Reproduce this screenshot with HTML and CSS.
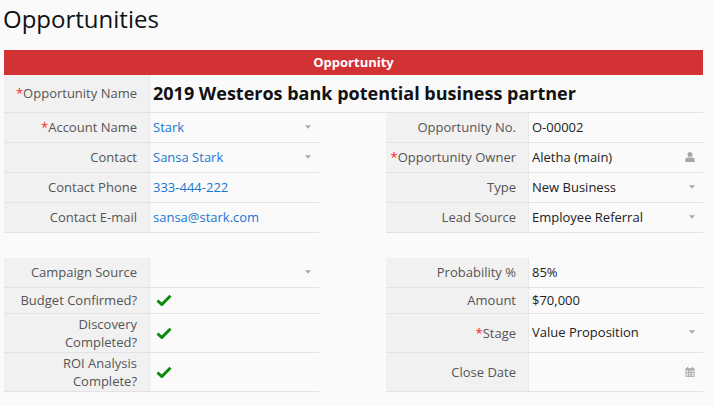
FILE: index.html
```html
<!DOCTYPE html>
<html lang="en">
<head>
<meta charset="utf-8">
<title>Opportunities</title>
<link rel="stylesheet" href="styles.css">
</head>
<body>
<h1 class="title">Opportunities</h1>
<section class="form">
  <div class="banner">Opportunity</div>
  <div class="row row-name">
    <div class="label"><span class="req">*</span>Opportunity Name</div>
    <div class="value name">2019 Westeros bank potential business partner</div>
  </div>
  <div class="columns">
    <div class="rows left">
      <div class="row"><div class="label"><span class="req">*</span>Account Name</div><div class="value link">Stark<svg class="caret" viewBox="0 0 7 4"><path d="M0 0h7L3.500 4z"/></svg></div></div>
      <div class="row"><div class="label">Contact</div><div class="value link">Sansa Stark<svg class="caret" viewBox="0 0 7 4"><path d="M0 0h7L3.500 4z"/></svg></div></div>
      <div class="row"><div class="label">Contact Phone</div><div class="value link">333-444-222</div></div>
      <div class="row"><div class="label">Contact E-mail</div><div class="value link">sansa@stark.com</div></div>
    </div>
    <div class="rows right">
      <div class="row"><div class="label">Opportunity No.</div><div class="value">O-00002</div></div>
      <div class="row"><div class="label"><span class="req">*</span>Opportunity Owner</div><div class="value">Aletha (main)<svg class="icon" viewBox="0 0 10 10"><circle cx="5" cy="2.600" r="2.500"/><path d="M.3 10V7.600C.3 6.100 1.400 5.400 2.800 5.400h4.400c1.400 0 2.500.7 2.500 2.200V10z"/></svg></div></div>
      <div class="row"><div class="label">Type</div><div class="value">New Business<svg class="caret" viewBox="0 0 7 4"><path d="M0 0h7L3.500 4z"/></svg></div></div>
      <div class="row"><div class="label">Lead Source</div><div class="value">Employee Referral<svg class="caret" viewBox="0 0 7 4"><path d="M0 0h7L3.500 4z"/></svg></div></div>
    </div>
  </div>
  <div class="columns second">
    <div class="rows left">
      <div class="row"><div class="label">Campaign Source</div><div class="value"><svg class="caret" viewBox="0 0 7 4"><path d="M0 0h7L3.500 4z"/></svg></div></div>
      <div class="row short"><div class="label">Budget Confirmed?</div><div class="value"><svg class="check" viewBox="0 0 16 12"><path d="M1.500 6.500 5.800 10.500 14.500 1.800"/></svg></div></div>
      <div class="row tall"><div class="label">Discovery Completed?</div><div class="value"><svg class="check" viewBox="0 0 16 12"><path d="M1.500 6.500 5.800 10.500 14.500 1.800"/></svg></div></div>
      <div class="row tall"><div class="label">ROI Analysis Complete?</div><div class="value"><svg class="check" viewBox="0 0 16 12"><path d="M1.500 6.500 5.800 10.500 14.500 1.800"/></svg></div></div>
    </div>
    <div class="rows right">
      <div class="row"><div class="label">Probability %</div><div class="value">85%</div></div>
      <div class="row short"><div class="label">Amount</div><div class="value">$70,000</div></div>
      <div class="row tall"><div class="label"><span class="req">*</span>Stage</div><div class="value lifted">Value Proposition<svg class="caret" viewBox="0 0 7 4"><path d="M0 0h7L3.500 4z"/></svg></div></div>
      <div class="row tall"><div class="label">Close Date</div><div class="value"><svg class="icon" viewBox="0 0 10 10"><path fill-rule="evenodd" d="M2 0h1.200v1.200h3.600V0H8v1.200h1.500V10H.5V1.200H2zM1.300 3.500V5h2V3.500zm3 0V5h1.400V3.500zm2.400 0V5h2V3.500zM1.300 6V7.500h2V6zm3 0V7.500h1.400V6zm2.400 0V7.500h2V6zM1.300 8.300V9.300h2V8.300zm3 0V9.300h1.400V8.300zm2.400 0V9.300h2V8.300z"/></svg></div></div>
    </div>
  </div>
</section>
</body>
</html>
```
FILE: styles.css
```css
* { box-sizing: border-box; }
html, body { margin: 0; height: 100%; }
body {
  background: #fafafa;
  font-family: "Open Sans", sans-serif;
  font-size: 13px;
  color: #222;
  overflow: hidden;
}
.title {
  margin: 0;
  padding: 2px 0 0 3px;
  height: 50px;
  font-size: 24px;
  font-weight: 400;
  line-height: 33px;
  color: #111;
}
.form { margin: 0 11px 0 4px; }
.banner {
  height: 25px;
  background: #d33235;
  color: #fff;
  font-weight: 700;
  font-size: 13px;
  line-height: 25px;
  text-align: center;
}
.columns {
  display: grid;
  grid-template-columns: 315px 317px;
  column-gap: 67px;
}
.second { margin-top: 25px; }
.rows { display: flex; flex-direction: column; }
.row {
  display: flex;
  height: 30px;
  border-bottom: 1px solid #e2e2e2;
}
.row-name { height: 38px; }
.short { height: 26px; }
.tall { height: 39px; }
.label {
  display: flex;
  align-items: center;
  justify-content: flex-end;
  flex-wrap: wrap;
  text-align: right;
  width: 146px;
  padding: 0 12px 2px 0;
  background: #f1f1f1;
  border-right: 1px solid #e8e8e8;
  color: #555;
  line-height: 18px;
}
.tall .label { padding-bottom: 0; }
.right .label { width: 143px; }
.req { color: #f22; }
.value {
  flex: 1;
  display: flex;
  align-items: center;
  justify-content: space-between;
  padding: 0 8px 2px 3px;
  min-width: 0;
}
.name {
  font-size: 18px;
  font-weight: 700;
  color: #111;
  white-space: nowrap;
}
.link { color: #1a76d2; }
.caret {
  width: 6px;
  height: 4px;
  margin-left: auto;
  fill: #a8a8a8;
  flex: none;
}
.icon {
  width: 10px;
  height: 10px;
  margin-left: auto;
  fill: #a8a8a8;
  flex: none;
}
.tall .value { padding-bottom: 0; }
.tall .lifted { padding-bottom: 2px; }
.check {
  width: 16px;
  height: 12px;
  margin-left: 3px;
  fill: none;
  stroke: #0a8a0a;
  stroke-width: 3;
  flex: none;
}
```
